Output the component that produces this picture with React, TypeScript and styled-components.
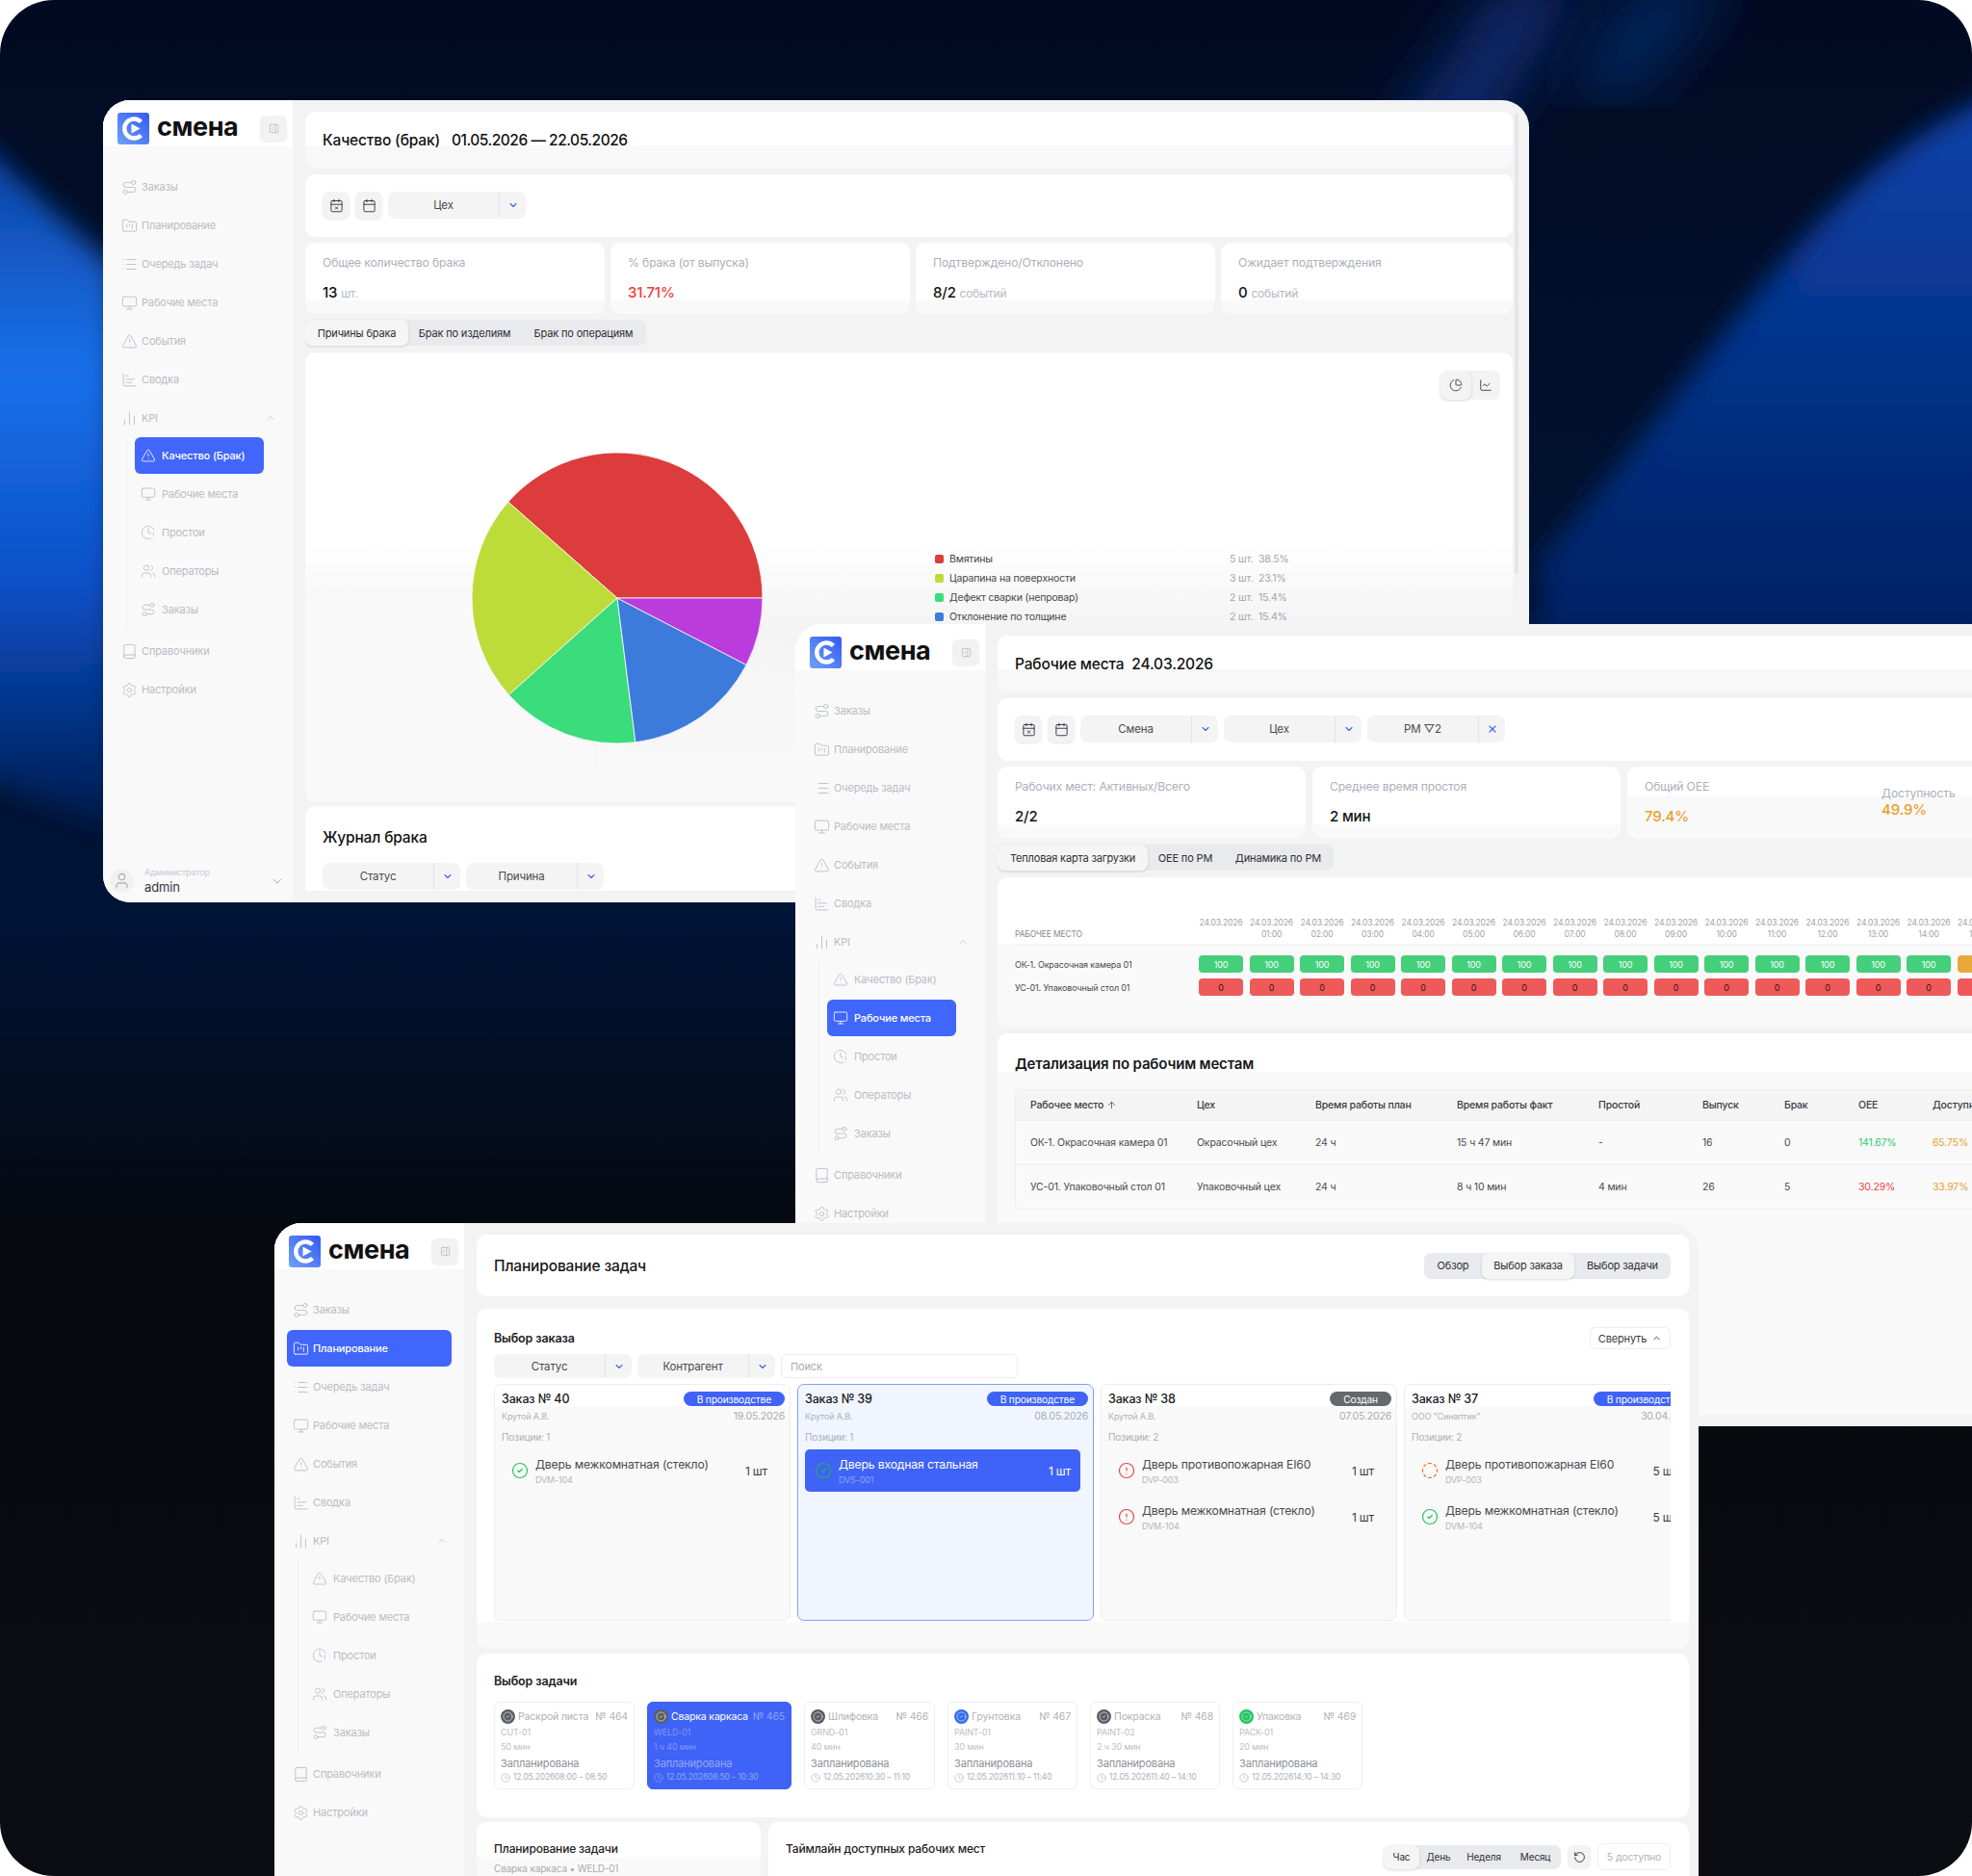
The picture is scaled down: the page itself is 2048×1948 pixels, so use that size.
import { ReactNode } from "react";
import styled, { createGlobalStyle } from "styled-components";
import {
  ArrowUp,
  Book,
  Calendar,
  CalendarX,
  ChartBar,
  ChartLine,
  ChartNoAxesColumn,
  ChartPie,
  ChevronDown,
  ChevronUp,
  CircleAlert,
  CircleCheck,
  CircleDashed,
  Clock,
  ClockAlert,
  FolderKanban,
  List,
  Monitor,
  PanelRightOpen,
  RotateCcw,
  Route,
  Settings,
  TriangleAlert,
  User,
  Users,
  X,
} from "lucide-react";

const FONT = `Inter, "Noto Sans", "Liberation Sans", sans-serif`;

const GlobalStyle = createGlobalStyle`
  html, body {
    margin: 0;
    background: #fff;
  }
  * {
    box-sizing: border-box;
  }
`;

/* ---------- data ---------- */

const navTop = [
  { key: "orders", label: "Заказы", icon: Route },
  { key: "planning", label: "Планирование", icon: FolderKanban },
  { key: "queue", label: "Очередь задач", icon: List },
  { key: "places", label: "Рабочие места", icon: Monitor },
  { key: "events", label: "События", icon: TriangleAlert },
  { key: "summary", label: "Сводка", icon: ChartBar },
];

const navKpi = [
  { key: "quality", label: "Качество (Брак)", icon: TriangleAlert },
  { key: "kpiPlaces", label: "Рабочие места", icon: Monitor },
  { key: "idle", label: "Простои", icon: ClockAlert },
  { key: "operators", label: "Операторы", icon: Users },
  { key: "kpiOrders", label: "Заказы", icon: Route },
];

const pieData = [
  { label: "Вмятины", count: "5 шт.", pct: "38.5%", share: 38.5, color: "#dc3c3c" },
  { label: "Царапина на поверхности", count: "3 шт.", pct: "23.1%", share: 23.1, color: "#bddc3a" },
  { label: "Дефект сварки (непровар)", count: "2 шт.", pct: "15.4%", share: 15.4, color: "#3adc7b" },
  { label: "Отклонение по толщине", count: "2 шт.", pct: "15.4%", share: 15.4, color: "#3c7bdc" },
  { label: "", count: "", pct: "", share: 7.6, color: "#bb3cdc" },
];

const heatHours = ["", "01:00", "02:00", "03:00", "04:00", "05:00", "06:00", "07:00", "08:00", "09:00", "10:00", "11:00", "12:00", "13:00", "14:00", "15:00"];

const detailColumns = "173px 123px 147px 147px 108px 85px 77px 77px 100px";

const detailRows = [
  { name: "ОК-1. Окрасочная камера 01", shop: "Окрасочный цех", plan: "24 ч", fact: "15 ч 47 мин", idle: "-", out: "16", bad: "0", oee: "141.67%", oeeColor: "#2ecc71", avail: "65.75%" },
  { name: "УС-01. Упаковочный стол 01", shop: "Упаковочный цех", plan: "24 ч", fact: "8 ч 10 мин", idle: "4 мин", out: "26", bad: "5", oee: "30.29%", oeeColor: "#ef4444", avail: "33.97%" },
];

const orders = [
  {
    title: "Заказ № 40",
    status: "В производстве",
    statusGray: false,
    client: "Крутой А.В.",
    date: "19.05.2026",
    count: "Позиции: 1",
    selected: false,
    items: [{ name: "Дверь межкомнатная (стекло)", code: "DVM-104", qty: "1 шт", state: "done" }],
  },
  {
    title: "Заказ № 39",
    status: "В производстве",
    statusGray: false,
    client: "Крутой А.В.",
    date: "08.05.2026",
    count: "Позиции: 1",
    selected: true,
    items: [{ name: "Дверь входная стальная", code: "DVS-001", qty: "1 шт", state: "done" }],
  },
  {
    title: "Заказ № 38",
    status: "Создан",
    statusGray: true,
    client: "Крутой А.В.",
    date: "07.05.2026",
    count: "Позиции: 2",
    selected: false,
    items: [
      { name: "Дверь противопожарная EI60", code: "DVP-003", qty: "1 шт", state: "alert" },
      { name: "Дверь межкомнатная (стекло)", code: "DVM-104", qty: "1 шт", state: "alert" },
    ],
  },
  {
    title: "Заказ № 37",
    status: "В производстве",
    statusGray: false,
    client: 'ООО "Синаптик"',
    date: "30.04.2026",
    count: "Позиции: 2",
    selected: false,
    items: [
      { name: "Дверь противопожарная EI60", code: "DVP-003", qty: "5 шт", state: "progress" },
      { name: "Дверь межкомнатная (стекло)", code: "DVM-104", qty: "5 шт", state: "done" },
    ],
  },
];

const tasks = [
  { name: "Раскрой листа", no: "№ 464", code: "CUT-01", time: "50 мин", range: "12.05.202608:00 – 08:50", dot: "#5a5d63", width: 146 },
  { name: "Сварка каркаса", no: "№ 465", code: "WELD-01", time: "1 ч 40 мин", range: "12.05.202608:50 – 10:30", dot: "#5a5d63", width: 150, selected: true },
  { name: "Шлифовка", no: "№ 466", code: "GRND-01", time: "40 мин", range: "12.05.202610:30 – 11:10", dot: "#5a5d63", width: 136 },
  { name: "Грунтовка", no: "№ 467", code: "PAINT-01", time: "30 мин", range: "12.05.202611:10 – 11:40", dot: "#2f6cf0", width: 135 },
  { name: "Покраска", no: "№ 468", code: "PAINT-02", time: "2 ч 30 мин", range: "12.05.202611:40 – 14:10", dot: "#5a5d63", width: 135 },
  { name: "Упаковка", no: "№ 469", code: "PACK-01", time: "20 мин", range: "12.05.202614:10 – 14:30", dot: "#22c55e", width: 135 },
];

/* ---------- small parts ---------- */

const slicePath = (start: number, end: number, r: number) => {
  const a = (start * Math.PI) / 180;
  const b = (end * Math.PI) / 180;
  const large = end - start > 180 ? 1 : 0;
  return `M${r} ${r} L${r + r * Math.cos(a)} ${r - r * Math.sin(a)} A${r} ${r} 0 ${large} 0 ${r + r * Math.cos(b)} ${r - r * Math.sin(b)} Z`;
};

const Logo = () => (
  <svg width="33" height="33" viewBox="0 0 33 33">
    <defs>
      <linearGradient id="logoFill" x1="0" y1="1" x2="1" y2="0">
        <stop offset="0" stopColor="#6ea2fb" />
        <stop offset="1" stopColor="#3458f2" />
      </linearGradient>
    </defs>
    <rect width="33" height="33" rx="3" fill="url(#logoFill)" />
    <path d="M24.5 9.6A10 10 0 1 0 24.5 23.4" fill="none" stroke="#fff" strokeWidth="4.4" />
    <path d="M14.5 11.5L23.5 16.5L14.5 21.5Z" fill="#fff" />
  </svg>
);

const Select = ({ label, height = 28, clear }: { label: string; height?: number; clear?: boolean }) => (
  <SelectBox $height={height}>
    <SelectLabel>{label}</SelectLabel>
    <SelectArrow>{clear ? <X size={12} strokeWidth={2.2} /> : <ChevronDown size={12} strokeWidth={2.2} />}</SelectArrow>
  </SelectBox>
);

const Sidebar = ({ active }: { active: string }) => (
  <Side>
    <SideHead>
      <Logo />
      <Brand>смена</Brand>
      <CollapseBtn>
        <PanelRightOpen size={11} strokeWidth={1.4} />
      </CollapseBtn>
    </SideHead>
    <NavList>
      {navTop.map(item => (
        <NavItem key={item.key} $active={item.key === active}>
          <item.icon size={17} strokeWidth={1.25} />
          {item.label}
        </NavItem>
      ))}
      <NavItem>
        <ChartNoAxesColumn size={17} strokeWidth={1.25} />
        KPI
        <NavChevron>
          <ChevronUp size={12} strokeWidth={1.4} />
        </NavChevron>
      </NavItem>
      <SubList>
        {navKpi.map(item => (
          <SubItem key={item.key} $active={item.key === active}>
            <item.icon size={16} strokeWidth={1.25} />
            {item.label}
          </SubItem>
        ))}
      </SubList>
      <NavItem>
        <Book size={17} strokeWidth={1.25} />
        Справочники
      </NavItem>
      <NavItem>
        <Settings size={17} strokeWidth={1.25} />
        Настройки
      </NavItem>
    </NavList>
    <SideFoot>
      <Avatar>
        <User size={19} strokeWidth={1.3} />
      </Avatar>
      <UserText>
        <UserRole>Администратор</UserRole>
        <UserName>admin</UserName>
      </UserText>
      <FootChevron>
        <ChevronDown size={16} strokeWidth={1.4} />
      </FootChevron>
    </SideFoot>
  </Side>
);

const Tabs = ({ items, active, small, center }: { items: { label: string; width: number }[]; active: number; small?: boolean; center?: boolean }) => (
  <TabBar $small={small} $center={center}>
    {items.map((tab, i) => (
      <Tab key={tab.label} $active={i === active} $width={tab.width} $small={small}>
        {tab.label}
      </Tab>
    ))}
  </TabBar>
);

const Stat = ({ title, children }: { title: string; children: ReactNode }) => (
  <StatCard>
    <StatTitle>{title}</StatTitle>
    <StatValue>{children}</StatValue>
  </StatCard>
);

const StatusIcon = ({ state, selected }: { state: string; selected: boolean }) => {
  if (state === "alert") return <CircleAlert size={18} color="#e04848" strokeWidth={1.6} />;
  if (state === "progress") return <CircleDashed size={18} color="#e9762d" strokeWidth={1.6} />;
  return <CircleCheck size={18} color={selected ? "#22b455" : "#22c55e"} strokeWidth={1.6} />;
};

/* ---------- screens ---------- */

const QualityWindow = () => {
  let angle = 0;
  return (
    <Window $x={107} $y={104}>
      <Sidebar active="quality" />
      <Main $right={17}>
        <ScrollThumb />
        <Scroll>
          <TitleCard $height={59}>
            <PageTitle>
              Качество (брак)&nbsp;&nbsp; <DateText>01.05.2026 — 22.05.2026</DateText>
            </PageTitle>
          </TitleCard>
          <Controls>
            <IconBtn>
              <CalendarX size={15} strokeWidth={1.5} />
            </IconBtn>
            <IconBtn>
              <Calendar size={15} strokeWidth={1.5} />
            </IconBtn>
            <Select label="Цех" />
          </Controls>
          <StatRow>
            <Stat title="Общее количество брака">
              13 <Unit>шт.</Unit>
            </Stat>
            <Stat title="% брака (от выпуска)">
              <ValueColor $color="#ef3b3b">31.71%</ValueColor>
            </Stat>
            <Stat title="Подтверждено/Отклонено">
              8/2 <Unit>событий</Unit>
            </Stat>
            <Stat title="Ожидает подтверждения">
              0 <Unit>событий</Unit>
            </Stat>
          </StatRow>
          <Tabs
            active={0}
            items={[
              { label: "Причины брака", width: 107 },
              { label: "Брак по изделиям", width: 117 },
              { label: "Брак по операциям", width: 130 },
            ]}
          />
          <ChartCard>
            <ChartToolbar>
              <ChartToggle>
                <ToggleBtn $active>
                  <ChartPie size={14} strokeWidth={1.5} />
                </ToggleBtn>
                <ToggleBtn>
                  <ChartLine size={14} strokeWidth={1.5} />
                </ToggleBtn>
              </ChartToggle>
            </ChartToolbar>
            <ChartBody>
              <svg width="304" height="304" viewBox="-1 -1 304 304">
                {pieData.map(slice => {
                  const start = angle;
                  angle += (slice.share / 100) * 360;
                  return <path key={slice.color} d={slicePath(start, angle, 151)} fill={slice.color} stroke="#fff" strokeWidth="0.8" />;
                })}
              </svg>
              <Legend>
                {pieData
                  .filter(slice => slice.label)
                  .map(slice => (
                    <LegendRow key={slice.label}>
                      <LegendDot $color={slice.color} />
                      <LegendName>{slice.label}</LegendName>
                      <LegendValue>{slice.count}</LegendValue>
                      <LegendValue>{slice.pct}</LegendValue>
                    </LegendRow>
                  ))}
              </Legend>
            </ChartBody>
          </ChartCard>
          <JournalCard>
            <SectionTitle>Журнал брака</SectionTitle>
            <FilterRow>
              <Select label="Статус" />
              <Select label="Причина" />
            </FilterRow>
          </JournalCard>
        </Scroll>
      </Main>
    </Window>
  );
};

const PlacesWindow = () => (
  <Window $x={826} $y={648}>
    <Sidebar active="kpiPlaces" />
    <Main $right={17}>
      <Scroll>
        <TitleCard $height={59}>
          <PageTitle>Рабочие места&nbsp;&nbsp;24.03.2026</PageTitle>
        </TitleCard>
        <Controls>
          <IconBtn>
            <CalendarX size={15} strokeWidth={1.5} />
          </IconBtn>
          <IconBtn>
            <Calendar size={15} strokeWidth={1.5} />
          </IconBtn>
          <Select label="Смена" />
          <Select label="Цех" />
          <Select label="РМ ▽2" clear />
        </Controls>
        <PlacesStats>
          <Stat title="Рабочих мест: Активных/Всего">2/2</Stat>
          <Stat title="Среднее время простоя">2 мин</Stat>
          <OeeCard>
            <div>
              <StatTitle>Общий OEE</StatTitle>
              <StatValue>
                <ValueColor $color="#e9a02d">79.4%</ValueColor>
              </StatValue>
            </div>
            <OeeSide>
              <StatTitle>Доступность</StatTitle>
              <OeeSideValue>49.9%</OeeSideValue>
            </OeeSide>
          </OeeCard>
        </PlacesStats>
        <Tabs
          active={0}
          items={[
            { label: "Тепловая карта загрузки", width: 156 },
            { label: "OEE по РМ", width: 78 },
            { label: "Динамика по РМ", width: 115 },
          ]}
        />
        <HeatCard>
          <HeatGrid>
            <HeatHeadLabel>РАБОЧЕЕ МЕСТО</HeatHeadLabel>
            {heatHours.map(hour => (
              <HeatHead key={hour || "day"}>
                24.03.2026
                <br />
                {hour || "\u00a0"}
              </HeatHead>
            ))}
            <HeatRule />
            <HeatLabel>ОК-1. Окрасочная камера 01</HeatLabel>
            {heatHours.map((hour, i) => (
              <HeatCell key={hour || "day"} $color={i === 15 ? "#e9a93a" : "#45cf7a"} $dark={false}>
                {i === 15 ? "" : "100"}
              </HeatCell>
            ))}
            <HeatLabel>УС-01. Упаковочный стол 01</HeatLabel>
            {heatHours.map(hour => (
              <HeatCell key={hour || "day"} $color="#ee5a5a" $dark>
                0
              </HeatCell>
            ))}
          </HeatGrid>
        </HeatCard>
        <DetailCard>
          <DetailTitle>Детализация по рабочим местам</DetailTitle>
          <DetailTable>
            <DetailHead>
              <span>
                Рабочее место <ArrowUp size={11} strokeWidth={1.6} />
              </span>
              <span>Цех</span>
              <span>Время работы план</span>
              <span>Время работы факт</span>
              <span>Простой</span>
              <span>Выпуск</span>
              <span>Брак</span>
              <span>OEE</span>
              <span>Доступность</span>
            </DetailHead>
            {detailRows.map(row => (
              <DetailRow key={row.name}>
                <span>{row.name}</span>
                <span>{row.shop}</span>
                <span>{row.plan}</span>
                <span>{row.fact}</span>
                <span>{row.idle}</span>
                <span>{row.out}</span>
                <span>{row.bad}</span>
                <ValueColor $color={row.oeeColor}>{row.oee}</ValueColor>
                <ValueColor $color="#e9a02d">{row.avail}</ValueColor>
              </DetailRow>
            ))}
          </DetailTable>
        </DetailCard>
      </Scroll>
    </Main>
  </Window>
);

const PlanningWindow = () => (
  <Window $x={285} $y={1270} $width={1479}>
    <Sidebar active="planning" />
    <Main $right={10}>
      <Scroll>
        <PlanHeader>
          <PlanTitle>Планирование задач</PlanTitle>
          <Tabs
            center
            active={1}
            items={[
              { label: "Обзор", width: 60 },
              { label: "Выбор заказа", width: 96 },
              { label: "Выбор задачи", width: 100 },
            ]}
          />
        </PlanHeader>
        <OrdersCard>
          <OrdersTop>
            <SubTitle>Выбор заказа</SubTitle>
            <CollapseToggle>
              Свернуть <ChevronUp size={11} strokeWidth={2} />
            </CollapseToggle>
          </OrdersTop>
          <FilterRow>
            <Select label="Статус" height={25} />
            <Select label="Контрагент" height={25} />
            <SearchBox>Поиск</SearchBox>
          </FilterRow>
          <OrderRow>
            {orders.map(order => (
              <OrderCard key={order.title} $selected={order.selected}>
                <OrderHead>
                  <OrderTitle>{order.title}</OrderTitle>
                  <Badge $gray={order.statusGray}>{order.status}</Badge>
                </OrderHead>
                <OrderMeta>
                  <OrderClient>{order.client}</OrderClient>
                  <OrderDate>{order.date}</OrderDate>
                </OrderMeta>
                <OrderCount>{order.count}</OrderCount>
                <OrderItems>
                  {order.items.map(item => (
                    <OrderItem key={item.name} $selected={order.selected}>
                      <StatusIcon state={item.state} selected={order.selected} />
                      <ItemText>
                        <ItemName $selected={order.selected}>{item.name}</ItemName>
                        <ItemCode $selected={order.selected}>{item.code}</ItemCode>
                      </ItemText>
                      <ItemQty $selected={order.selected}>{item.qty}</ItemQty>
                    </OrderItem>
                  ))}
                </OrderItems>
              </OrderCard>
            ))}
          </OrderRow>
        </OrdersCard>
        <TasksCard>
          <SubTitle>Выбор задачи</SubTitle>
          <TaskRow>
            {tasks.map(task => (
              <TaskCard key={task.no} $width={task.width} $selected={task.selected}>
                <TaskHead $selected={task.selected}>
                  <TaskDot $color={task.dot}>
                    <CircleCheck size={11} strokeWidth={1.6} />
                  </TaskDot>
                  <TaskName>{task.name}</TaskName>
                  <TaskNo $selected={task.selected}>{task.no}</TaskNo>
                </TaskHead>
                <TaskLine $selected={task.selected}>{task.code}</TaskLine>
                <TaskLine $selected={task.selected}>{task.time}</TaskLine>
                <TaskState $selected={task.selected}>Запланирована</TaskState>
                <TaskRange $selected={task.selected}>
                  <Clock size={10} strokeWidth={1.5} /> {task.range}
                </TaskRange>
              </TaskCard>
            ))}
          </TaskRow>
        </TasksCard>
        <BottomRow>
          <PlanFormCard>
            <BottomTitle>Планирование задачи</BottomTitle>
            <BottomSub>Сварка каркаса • WELD-01</BottomSub>
          </PlanFormCard>
          <TimelineCard>
            <BottomTitle>Таймлайн доступных рабочих мест</BottomTitle>
            <TimelineTools>
              <Tabs
                small
                center
                active={0}
                items={[
                  { label: "Час", width: 37 },
                  { label: "День", width: 40 },
                  { label: "Неделя", width: 54 },
                  { label: "Месяц", width: 53 },
                ]}
              />
              <RefreshBtn>
                <RotateCcw size={13} strokeWidth={1.6} />
              </RefreshBtn>
              <AvailableBox>5 доступно</AvailableBox>
            </TimelineTools>
          </TimelineCard>
        </BottomRow>
      </Scroll>
    </Main>
  </Window>
);

export default function App() {
  return (
    <>
      <GlobalStyle />
      <Stage>
        <Backdrop viewBox="0 0 2048 1948" preserveAspectRatio="none">
          <defs>
            <linearGradient id="bgBase" x1="0" y1="0" x2="0" y2="1">
              <stop offset="0" stopColor="#020a22" />
              <stop offset="0.27" stopColor="#00122f" />
              <stop offset="0.49" stopColor="#001436" />
              <stop offset="0.66" stopColor="#06090f" />
              <stop offset="1" stopColor="#0b0d12" />
            </linearGradient>
            <linearGradient id="bgWave" x1="0.5" y1="0" x2="0.5" y2="1">
              <stop offset="0" stopColor="#0a43ad" />
              <stop offset="1" stopColor="#002060" />
            </linearGradient>
            <linearGradient id="bgLeft" x1="0" y1="0" x2="0" y2="1">
              <stop offset="0" stopColor="#0b3f9c" />
              <stop offset="0.35" stopColor="#1a70ea" />
              <stop offset="0.65" stopColor="#0a50c8" />
              <stop offset="1" stopColor="#001a4c" />
            </linearGradient>
            <filter id="soft">
              <feGaussianBlur stdDeviation="14" />
            </filter>
            <filter id="softer">
              <feGaussianBlur stdDeviation="30" />
            </filter>
          </defs>
          <rect width="2048" height="1948" fill="url(#bgBase)" />
          <path d="M-40 130L120 280V860L-40 800Z" fill="url(#bgLeft)" filter="url(#soft)" />
          <path d="M2100 90C1900 150 1780 380 1600 580V680H2100Z" fill="url(#bgWave)" filter="url(#soft)" />
          <path d="M2100 660H1500V900H2100Z" fill="#001f57" filter="url(#softer)" />
          <path d="M1650 -20L1560 -20L1400 210L1500 200Z" fill="#072c6e" filter="url(#softer)" />
          <path d="M1800 -20L1700 -20L1620 100L1700 100Z" fill="#06285f" filter="url(#softer)" />
        </Backdrop>
        <QualityWindow />
        <PlacesWindow />
        <PlanningWindow />
      </Stage>
    </>
  );
}

/* ---------- layout ---------- */

const Stage = styled.div`
  position: relative;
  width: 2048px;
  height: 1948px;
  border-radius: 56px;
  overflow: hidden;
  font-family: ${FONT};
  color: #1b1b1f;
  letter-spacing: -0.01em;
`;

const Backdrop = styled.svg`
  position: absolute;
  inset: 0;
  width: 100%;
  height: 100%;
`;

const Window = styled.section<{ $x: number; $y: number; $width?: number }>`
  position: absolute;
  left: ${p => p.$x}px;
  top: ${p => p.$y}px;
  width: ${p => p.$width ?? 1481}px;
  height: 833px;
  display: flex;
  background: #f3f3f3;
  border-radius: 28px;
  overflow: hidden;
`;

const Side = styled.aside`
  flex: 0 0 197px;
  display: flex;
  flex-direction: column;
  background: #f9f9f9;
`;

const SideHead = styled.div`
  height: 48px;
  margin-bottom: 22px;
  padding: 13px 6px 0 15px;
  display: flex;
  align-items: flex-start;
  background: #fff;
`;

const Brand = styled.div`
  margin: -1px 0 0 8px;
  font-size: 27px;
  line-height: 31px;
  font-weight: 700;
  letter-spacing: -0.015em;
  color: #111;
`;

const CollapseBtn = styled.div`
  margin: 3px 0 0 auto;
  width: 28px;
  height: 27px;
  display: flex;
  align-items: center;
  justify-content: center;
  background: #f2f2f3;
  border-radius: 6px;
  color: #a9adb8;
  box-shadow: 0 1px 2px rgba(0, 0, 0, 0.06);
`;

const NavList = styled.nav`
  display: flex;
  flex-direction: column;
`;

const NavItem = styled.div<{ $active?: boolean }>`
  position: relative;
  height: 38px;
  margin: 1px 13px;
  padding-left: 6px;
  display: flex;
  align-items: center;
  gap: 4px;
  border-radius: 6px;
  font-size: 11px;
  background: ${p => (p.$active ? "#4166fb" : "transparent")};
  color: ${p => (p.$active ? "#fff" : "#b9bcc6")};
  font-weight: ${p => (p.$active ? 500 : 400)};
  svg {
    flex: none;
  }
`;

const NavChevron = styled.span`
  margin-left: auto;
  margin-right: 4px;
  display: flex;
`;

const SubList = styled.div`
  margin: 0 0 2px 24px;
  padding-left: 8px;
  border-left: 1px solid #eeeeef;
  display: flex;
  flex-direction: column;
`;

const SubItem = styled.div<{ $active?: boolean }>`
  width: 134px;
  height: 38px;
  margin-bottom: 2px;
  padding-left: 6px;
  display: flex;
  align-items: center;
  gap: 6px;
  border-radius: 6px;
  font-size: 11px;
  background: ${p => (p.$active ? "#4166fb" : "transparent")};
  color: ${p => (p.$active ? "#fff" : "#b9bcc6")};
  font-weight: ${p => (p.$active ? 500 : 400)};
  svg {
    flex: none;
  }
`;

const SideFoot = styled.div`
  margin-top: auto;
  padding: 0 0 8px 7px;
  display: flex;
  align-items: center;
`;

const Avatar = styled.div`
  width: 25px;
  height: 25px;
  border-radius: 50%;
  background: #f1f1f2;
  color: #a4a7b2;
  display: flex;
  align-items: center;
  justify-content: center;
`;

const UserText = styled.div`
  margin-left: 11px;
`;

const UserRole = styled.div`
  font-size: 9px;
  line-height: 12px;
  color: #c6cad6;
`;

const UserName = styled.div`
  margin-top: 2px;
  font-size: 13px;
  line-height: 15px;
  color: #34353a;
`;

const FootChevron = styled.div`
  margin-left: auto;
  margin-right: 8px;
  display: flex;
  color: #a4a7b2;
`;

const Main = styled.main<{ $right: number }>`
  position: relative;
  flex: 1;
  min-width: 0;
  padding: 12px ${p => p.$right}px 12px 13px;
  display: flex;
`;

/* scrollbar thumb, lies over the edge of the content */
const ScrollThumb = styled.div`
  position: absolute;
  top: 14px;
  right: 11px;
  width: 4px;
  height: 478px;
  border-radius: 2px;
  background: #e5e6e8;
`;

const Scroll = styled.div`
  flex: 1;
  min-width: 0;
  display: flex;
  flex-direction: column;
  gap: 6px;
  overflow: hidden;
`;

const TitleCard = styled.div<{ $height: number }>`
  flex: none;
  height: ${p => p.$height}px;
  padding: 20px 18px 0;
  border-radius: 10px;
  background: linear-gradient(#fff 60%, #f8f8f8 60%);
`;

const PageTitle = styled.h1`
  margin: 0;
  font-size: 15.5px;
  line-height: 20px;
  font-weight: 500;
  color: #111;
`;

const DateText = styled.span`
  letter-spacing: -0.03em;
`;

const Controls = styled.div`
  flex: none;
  height: 65px;
  padding: 18px 18px 0;
  display: flex;
  align-items: flex-start;
  gap: 6px;
  border-radius: 10px;
  background: #fff;
`;

const IconBtn = styled.div`
  flex: none;
  width: 28px;
  height: 28px;
  display: flex;
  align-items: center;
  justify-content: center;
  color: #34353a;
  background: #f3f3f4;
  border-radius: 7px;
  box-shadow: 0 1px 2px rgba(0, 0, 0, 0.1);
`;

const SelectBox = styled.div<{ $height: number }>`
  flex: none;
  width: 143px;
  height: ${p => p.$height}px;
  display: flex;
  align-items: stretch;
  background: #f4f4f4;
  border-radius: 7px;
  font-size: 11.5px;
  color: #4a4b50;
`;

const SelectLabel = styled.div`
  flex: 1;
  display: flex;
  align-items: center;
  justify-content: center;
  border-right: 1px solid #e4e4e5;
`;

const SelectArrow = styled.div`
  flex: 0 0 27px;
  display: flex;
  align-items: center;
  justify-content: center;
  color: #3d62f5;
`;

const StatRow = styled.div`
  flex: none;
  height: 74px;
  display: grid;
  grid-template-columns: repeat(3, 311px) 1fr;
  gap: 6px;
`;

const PlacesStats = styled.div`
  flex: none;
  height: 75px;
  display: grid;
  grid-template-columns: 320px 320px 1fr;
  gap: 7px;
`;

const StatCard = styled.div`
  padding: 13px 18px 0;
  border-radius: 10px;
  background: linear-gradient(#fff 80%, #f9f9f9 80%);
`;

const OeeCard = styled(StatCard)`
  display: flex;
  background: linear-gradient(#fff 40%, #f9f9f9 40%);
`;

const OeeSide = styled.div`
  margin-left: 179px;
  padding-top: 7px;
`;

const OeeSideValue = styled.div`
  font-size: 15px;
  line-height: 18px;
  font-weight: 500;
  color: #e9a02d;
`;

const StatTitle = styled.div`
  font-size: 12.2px;
  line-height: 16px;
  color: #adb0ba;
  white-space: nowrap;
`;

const StatValue = styled.div`
  margin-top: 13px;
  font-size: 15px;
  line-height: 20px;
  font-weight: 500;
  color: #111;
`;

const Unit = styled.span`
  font-size: 12px;
  font-weight: 400;
  color: #b5b8c1;
`;

const ValueColor = styled.span<{ $color: string }>`
  color: ${p => p.$color};
`;

const TabBar = styled.div<{ $small?: boolean; $center?: boolean }>`
  flex: none;
  align-self: ${p => (p.$center ? "center" : "flex-start")};
  display: flex;
  height: ${p => (p.$small ? 25 : 27)}px;
  background: #e9eaed;
  border-radius: 7px;
`;

const Tab = styled.div<{ $active: boolean; $width: number; $small?: boolean }>`
  flex: 0 0 ${p => p.$width}px;
  display: flex;
  align-items: center;
  justify-content: center;
  font-size: ${p => (p.$small ? 10 : 11)}px;
  white-space: nowrap;
  color: #2f3034;
  border-radius: 7px;
  background: ${p => (p.$active ? "#f5f5f5" : "transparent")};
  box-shadow: ${p => (p.$active ? "0 1px 3px rgba(0,0,0,.14)" : "none")};
`;

const ChartCard = styled.div`
  flex: none;
  height: 467px;
  margin-top: 1px;
  padding: 19px 13px 0 0;
  border-radius: 10px;
  background:
    linear-gradient(#f9f9f9, #f9f9f9) left bottom / 300px 45.4% no-repeat,
    linear-gradient(#fff 42%, #f4f4f4 60%, #f9f9f9 100%);
`;

const ChartToolbar = styled.div`
  display: flex;
  justify-content: flex-end;
`;

const ChartToggle = styled.div`
  display: flex;
  height: 30px;
  background: #f3f3f4;
  border-radius: 7px;
`;

const ToggleBtn = styled.div<{ $active?: boolean }>`
  width: ${p => (p.$active ? 32 : 30)}px;
  display: flex;
  align-items: center;
  justify-content: center;
  color: #34353a;
  border-radius: 7px;
  box-shadow: ${p => (p.$active ? "0 1px 3px rgba(0,0,0,.16)" : "none")};
`;

const ChartBody = styled.div`
  margin: 54px 0 0 172px;
  display: flex;
  align-items: flex-start;
`;

const Legend = styled.div`
  margin: 101px 0 0 178px;
  display: flex;
  flex-direction: column;
`;

const LegendRow = styled.div`
  height: 20px;
  display: grid;
  grid-template-columns: 15px 291px 30px auto;
  align-items: center;
  font-size: 10.5px;
`;

const LegendDot = styled.span<{ $color: string }>`
  width: 9px;
  height: 9px;
  border-radius: 2px;
  background: ${p => p.$color};
`;

const LegendName = styled.span`
  color: #45464b;
`;

const LegendValue = styled.span`
  color: #a3a5ab;
  white-space: nowrap;
`;

const JournalCard = styled.div`
  flex: none;
  margin-top: -2px;
  padding: 23px 18px 0;
  height: 120px;
  border-radius: 10px 10px 0 0;
  background: #fff;
`;

const SectionTitle = styled.h2`
  margin: 0 0 16px;
  font-size: 15.5px;
  line-height: 20px;
  font-weight: 500;
  color: #111;
`;

const FilterRow = styled.div`
  display: flex;
  gap: 6px;
`;

const HeatCard = styled.div`
  flex: none;
  height: 156px;
  margin-top: 1px;
  padding: 41px 0 0 18px;
  border-radius: 10px;
  background: linear-gradient(#fff 44%, #f9f9f9 44%);
`;

const HeatGrid = styled.div`
  display: grid;
  grid-template-columns: 184.5px repeat(16, 46px);
  column-gap: 6.5px;
`;

const HeatHeadLabel = styled.div`
  align-self: end;
  font-size: 8.5px;
  line-height: 12px;
  color: #86888e;
`;

const HeatHead = styled.div`
  text-align: center;
  font-size: 8.5px;
  line-height: 12px;
  white-space: nowrap;
  color: #a1a3a9;
`;

const HeatRule = styled.div`
  grid-column: 1 / -1;
  height: 1px;
  margin: 5px 0 10px;
  background: #eeeeef;
`;

const HeatLabel = styled.div`
  height: 18px;
  margin-bottom: 6px;
  display: flex;
  align-items: center;
  font-size: 9px;
  white-space: nowrap;
  color: #4a4b50;
`;

const HeatCell = styled.div<{ $color: string; $dark: boolean }>`
  height: 18px;
  margin-bottom: 6px;
  display: flex;
  align-items: center;
  justify-content: center;
  font-size: 9px;
  border-radius: 4px;
  background: ${p => p.$color};
  color: ${p => (p.$dark ? "#3a1010" : "#fff")};
`;

const DetailCard = styled.div`
  flex: none;
  padding: 22px 0 0 18px;
  height: 400px;
  border-radius: 10px;
  background: linear-gradient(#fff 10%, #f9f9f9 10%);
`;

const DetailTitle = styled.h2`
  margin: 0 0 16px;
  font-size: 15px;
  line-height: 20px;
  font-weight: 600;
  color: #16171a;
`;

const DetailTable = styled.div`
  border: 1px solid #eeeeef;
  border-radius: 6px;
  width: 1300px;
`;

const DetailHead = styled.div`
  height: 31px;
  padding-left: 15px;
  display: grid;
  grid-template-columns: ${detailColumns};
  align-items: center;
  font-size: 10.5px;
  font-weight: 500;
  white-space: nowrap;
  color: #3a3b40;
  background: #f4f4f5;
  svg {
    vertical-align: -2px;
  }
`;

const DetailRow = styled.div`
  height: 46px;
  padding-left: 15px;
  display: grid;
  grid-template-columns: ${detailColumns};
  align-items: center;
  font-size: 10.5px;
  white-space: nowrap;
  color: #4a4b50;
  border-top: 1px solid #eeeeef;
`;

const PlanHeader = styled.div`
  flex: none;
  height: 64px;
  padding: 0 19px 0 18px;
  display: flex;
  align-items: center;
  justify-content: space-between;
  border-radius: 10px;
  background: #fff;
`;

const PlanTitle = styled.h1`
  margin: 0;
  font-size: 15.5px;
  font-weight: 500;
  color: #16171a;
`;

const OrdersCard = styled.div`
  flex: none;
  height: 353px;
  margin-top: 7px;
  padding: 19px 19px 0 18px;
  border-radius: 10px;
  background: linear-gradient(#fff 92%, #f9f9f9 92%);
`;

const OrdersTop = styled.div`
  height: 23px;
  margin-bottom: 5px;
  display: flex;
  align-items: center;
  justify-content: space-between;
`;

const SubTitle = styled.h3`
  margin: 0;
  font-size: 12.5px;
  line-height: 18px;
  font-weight: 600;
  color: #1f2024;
`;

const CollapseToggle = styled.div`
  width: 84px;
  height: 23px;
  display: flex;
  align-items: center;
  justify-content: center;
  gap: 5px;
  font-size: 11px;
  color: #3a3b40;
  background: #fff;
  border: 1px solid #efefef;
  border-radius: 6px;
`;

const SearchBox = styled.div`
  width: 246px;
  height: 25px;
  padding-left: 9px;
  display: flex;
  align-items: center;
  font-size: 11px;
  color: #a8aab1;
  background: #fff;
  border: 1px solid #ededee;
  border-radius: 5px;
`;

const OrderRow = styled.div`
  margin-top: 6px;
  display: flex;
  gap: 7px;
  overflow: hidden;
`;

const OrderCard = styled.article<{ $selected: boolean }>`
  flex: 0 0 308px;
  height: 246px;
  padding: 7px 5px 0 7px;
  border: 1px solid ${p => (p.$selected ? "#7fa0f5" : "#ededee")};
  border-radius: 7px;
  background: ${p => (p.$selected ? "#f1f5ff" : "linear-gradient(#fff 22px, #f9f9f9 22px)")};
`;

const OrderHead = styled.div`
  height: 15px;
  display: flex;
  align-items: center;
  justify-content: space-between;
`;

const OrderTitle = styled.div`
  font-size: 12.5px;
  font-weight: 500;
  color: #18191c;
`;

const Badge = styled.div<{ $gray: boolean }>`
  height: 15px;
  padding: 0 14px;
  display: flex;
  align-items: center;
  font-size: 10.2px;
  white-space: nowrap;
  color: #fff;
  border-radius: 8px;
  background: ${p => (p.$gray ? "#66686c" : "#3f63f6")};
`;

const OrderMeta = styled.div`
  margin-top: 2px;
  display: flex;
  justify-content: space-between;
  align-items: center;
`;

const OrderClient = styled.div`
  font-size: 9px;
  line-height: 13px;
  color: #b0b2b9;
`;

const OrderDate = styled.div`
  margin-top: 2px;
  font-size: 10.5px;
  line-height: 14px;
  color: #a8aab1;
`;

const OrderCount = styled.div`
  margin-top: 7px;
  height: 15px;
  font-size: 10px;
  line-height: 15px;
  color: #adb0b7;
`;

const OrderItems = styled.div`
  margin-top: 5px;
  display: flex;
  flex-direction: column;
  gap: 4px;
`;

const OrderItem = styled.div<{ $selected: boolean }>`
  width: 286px;
  height: 44px;
  padding: 0 10px;
  display: flex;
  align-items: center;
  border-radius: 5px;
  background: ${p => (p.$selected ? "#3f63f6" : "transparent")};
  svg {
    flex: none;
  }
`;

const ItemText = styled.div`
  margin-left: 7px;
  padding-top: 2px;
  flex: 1;
  min-width: 0;
`;

const ItemName = styled.div<{ $selected: boolean }>`
  font-size: 12.2px;
  line-height: 16px;
  white-space: nowrap;
  color: ${p => (p.$selected ? "#fff" : "#494a4f")};
`;

const ItemCode = styled.div<{ $selected: boolean }>`
  margin-top: 2px;
  font-size: 9px;
  line-height: 12px;
  color: ${p => (p.$selected ? "#8ea4f9" : "#b4b6bd")};
`;

const ItemQty = styled.div<{ $selected: boolean }>`
  font-size: 12px;
  white-space: nowrap;
  color: ${p => (p.$selected ? "#fff" : "#3a3b40")};
`;

const TasksCard = styled.div`
  flex: none;
  height: 170px;
  margin-top: -1px;
  padding: 20px 18px 0;
  border-radius: 10px;
  background: #fff;
`;

const TaskRow = styled.div`
  margin-top: 12px;
  display: flex;
  gap: 13px;
`;

const TaskCard = styled.article<{ $width: number; $selected?: boolean }>`
  flex: 0 0 ${p => p.$width}px;
  height: 91px;
  padding: 6px 6px 0;
  border: 1px solid ${p => (p.$selected ? "#3f63f6" : "#efeff0")};
  border-radius: 6px;
  background: ${p => (p.$selected ? "#3f63f6" : "#fff")};
`;

const TaskHead = styled.div<{ $selected?: boolean }>`
  height: 17px;
  display: flex;
  align-items: center;
  font-size: 10.5px;
  white-space: nowrap;
  color: ${p => (p.$selected ? "#fff" : "#b0b2b9")};
`;

const TaskDot = styled.span<{ $color: string }>`
  flex: none;
  width: 15px;
  height: 15px;
  display: flex;
  align-items: center;
  justify-content: center;
  border-radius: 50%;
  color: #e4e6ea;
  background: ${p => p.$color};
`;

const TaskName = styled.span`
  margin-left: 3px;
`;

const TaskNo = styled.span<{ $selected?: boolean }>`
  margin-left: auto;
  color: ${p => (p.$selected ? "#8ea4f9" : "#b0b2b9")};
`;

const TaskLine = styled.div<{ $selected?: boolean }>`
  height: 14px;
  margin-top: 1px;
  font-size: 9px;
  line-height: 14px;
  color: ${p => (p.$selected ? "#7f97f8" : "#bcbec5")};
`;

const TaskState = styled.div<{ $selected?: boolean }>`
  margin-top: 3px;
  font-size: 11px;
  line-height: 14px;
  color: ${p => (p.$selected ? "#93a6f9" : "#8e9097")};
`;

const TaskRange = styled.div<{ $selected?: boolean }>`
  margin-top: 1px;
  display: flex;
  align-items: center;
  gap: 3px;
  font-size: 8.5px;
  line-height: 13px;
  white-space: nowrap;
  color: ${p => (p.$selected ? "#93a6f9" : "#adb0b7")};
`;

const BottomRow = styled.div`
  flex: none;
  height: 120px;
  margin-top: -1px;
  display: flex;
  gap: 8px;
`;

const PlanFormCard = styled.div`
  flex: 0 0 295px;
  padding: 19px 18px 0;
  border-radius: 10px 10px 0 0;
  background: linear-gradient(#fff 36px, #f9f9f9 36px);
`;

const BottomTitle = styled.h3`
  margin: 0;
  font-size: 12px;
  line-height: 18px;
  font-weight: 500;
  color: #1f2024;
`;

const BottomSub = styled.div`
  margin-top: 4px;
  font-size: 10px;
  line-height: 14px;
  color: #a8aab1;
`;

const TimelineCard = styled.div`
  flex: 1;
  padding: 19px 19px 0 18px;
  display: flex;
  justify-content: space-between;
  align-items: flex-start;
  border-radius: 10px 10px 0 0;
  background: #fff;
`;

const TimelineTools = styled.div`
  margin-top: 3px;
  display: flex;
  align-items: center;
  gap: 7px;
`;

const RefreshBtn = styled.div`
  width: 24px;
  height: 25px;
  display: flex;
  align-items: center;
  justify-content: center;
  color: #222;
  background: #f3f3f4;
  border-radius: 6px;
`;

const AvailableBox = styled.div`
  width: 76px;
  height: 28px;
  display: flex;
  align-items: center;
  justify-content: center;
  font-size: 10.5px;
  color: #b0b2b9;
  background: #fff;
  border: 1px solid #efefef;
  border-radius: 6px;
`;
